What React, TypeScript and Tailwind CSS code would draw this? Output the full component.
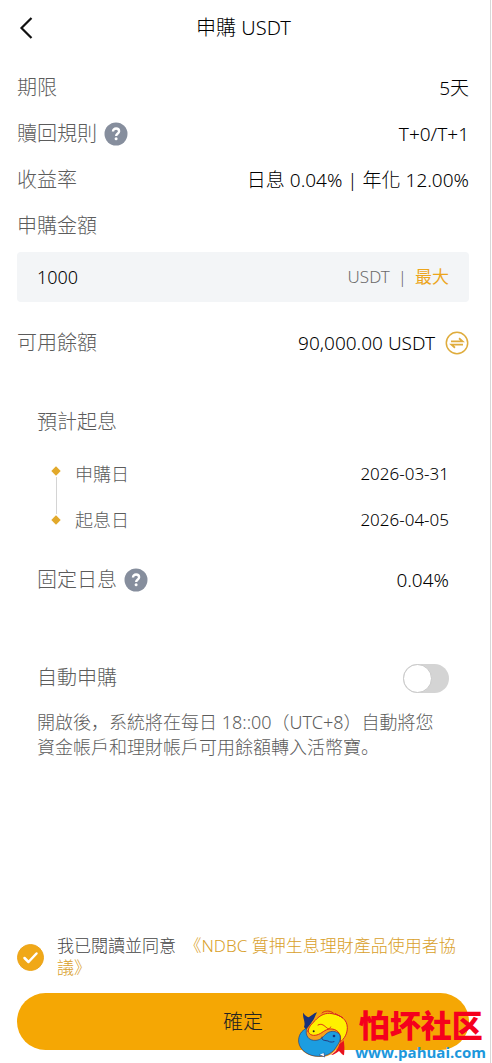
import { useState } from 'react';
import type { ReactNode } from 'react';

interface RowProps {
  label: string;
  help?: boolean;
  children?: ReactNode;
}

function HelpButton({ label }: { label: string }) {
  return (
    <button type="button" aria-label={`${label}說明`} className="ml-[7px] size-6">
      <svg viewBox="0 0 24 24" className="size-6">
        <circle cx="12" cy="12" r="11.5" fill="#868e9d" />
        <path d="M9 9.4c0-1.8 1.3-2.9 3.1-2.9s3 1.1 3 2.7c0 1.3-.8 1.900-1.600 2.500-.8.6-1.300 1-1.300 2.200" fill="none" stroke="#fff" strokeWidth="2.4" />
        <circle cx="12.1" cy="16.8" r="1.5" fill="#fff" />
      </svg>
    </button>
  );
}

function Row({ label, help, children }: RowProps) {
  return (
    <div className="flex min-h-[46px] items-center justify-between">
      <div className="flex items-center text-xl text-[#5c5c5c]">
        <span>{label}</span>
        {help && <HelpButton label={label} />}
      </div>
      <div className="flex items-center text-[19px] text-black">{children}</div>
    </div>
  );
}

function Diamond() {
  return (
    <svg viewBox="0 0 10 10" className="size-[10px] shrink-0">
      <path d="M5 0.3 9.7 5 5 9.7 0.3 5Z" fill="#e2a92b" />
    </svg>
  );
}

function FishLogo() {
  return (
    <svg viewBox="0 0 180 180" className="size-[60px] shrink-0" strokeLinejoin="round" strokeLinecap="round">
      {/* tails */}
      <path d="M30 72C36 56 24 44 28 29c4 8 10 12 16 14 8-4 14-12 25-15-6 10-8 22-20 36L36 80Z" fill="#18307c" />
      <path d="M136 112c2 16-6 32-25 44 8 0 16-6 24-12 4 4 8 10 15 13 2-16 2-32-2-50Z" fill="#e8121c" />
      {/* orange outline of both bodies */}
      <path d="M44 92C42 64 66 34 96 28c28-6 62 12 66 40 4 24-8 44-28 56-4 20-24 38-56 38-34 0-62-18-64-42-2-20 10-36 30-44Z" fill="#f6a11c" />
      <path d="M42 84c2-14 12-22 22-32 14-16 32-24 50-20 26 4 46 18 46 42 0 18-8 32-22 44 6-20-4-38-24-40-18-2-26 10-40 16-14 6-28 4-32-10Z" fill="#fff100" stroke="#d7261c" strokeWidth="3" />
      <path d="M38 76C22 82 12 98 14 118c4 24 30 42 60 42 26 0 44-12 54-30 10-14 14-26 8-36-8-10-24-12-36-4-14 10-16 20-34 22-22 2-34-14-28-36Z" fill="#1c9de0" stroke="#263b7c" strokeWidth="2" />
      {/* fins and gills */}
      <path d="M84 30c8-8 24-8 34 0M124 32l22 12" fill="none" stroke="#d7261c" strokeWidth="3" />
      <path d="M72 66c12-6 18 2 26 8 6 6 10 2 12-2" fill="none" stroke="#d7261c" strokeWidth="3" />
      <path d="M84 102c-4 12 12 10 18 12 6 4 12 4 18 2" fill="none" stroke="#263b7c" strokeWidth="3" />
      <path d="M76 155l16 7-2-12" fill="#fff" stroke="#263b7c" strokeWidth="2" />
      <circle cx="59" cy="85" r="3" fill="#222" />
      <circle cx="120" cy="99" r="4" fill="#18307c" />
    </svg>
  );
}

export default function App() {
  const [amount, setAmount] = useState('1000');
  const [autoBuy, setAutoBuy] = useState(false);
  const [agreed, setAgreed] = useState(true);

  return (
    <div className="mr-px flex min-h-screen flex-col border-r border-[#d8d8d8] bg-white font-['Noto_Sans','Noto_Sans_CJK_TC',sans-serif] font-light">
      <header className="grid h-14 grid-cols-3 items-center pr-5 pl-[17px]">
        <button type="button" aria-label="返回" className="size-6">
          <svg viewBox="0 0 24 24" className="size-6" fill="none" stroke="#111" strokeWidth="2.2">
            <path d="M14.5 2 4.5 12l10 10" />
          </svg>
        </button>
        <h1 className="text-center text-xl whitespace-nowrap text-black">申購 USDT</h1>
      </header>

      <main className="pt-[9px] pr-[21px] pl-[17px]">
        <Row label="期限">5天</Row>
        <Row label="贖回規則" help>T+0/T+1</Row>
        <Row label="收益率">日息 0.04% | 年化 12.00%</Row>
        <label htmlFor="amount" className="flex min-h-[46px] items-center text-xl text-[#5c5c5c]">申購金額</label>

        <div className="mt-[3px] flex h-[50px] items-center rounded bg-[#f3f5f7] px-5 text-[17px]">
          <input
            id="amount"
            value={amount}
            inputMode="decimal"
            onChange={(e) => setAmount(e.target.value)}
            className="min-w-0 flex-1 bg-transparent text-lg text-black outline-none"
          />
          <span className="text-[#6b6b6b]">USDT</span>
          <span className="mx-2 text-[#6b6b6b]">|</span>
          <button type="button" onClick={() => setAmount('90000')} className="font-normal text-[#eca51c]">最大</button>
        </div>

        <div className="mt-[18px]">
          <Row label="可用餘額">
            <span>90,000.00 USDT</span>
            <button type="button" aria-label="劃轉" className="ml-[10px] size-6">
              <svg viewBox="0 0 24 24" className="size-6" fill="none" stroke="#dfac3c" strokeWidth="1.5">
                <circle cx="12" cy="12" r="10.7" />
                <path d="M6 10.3h11.500L14 7.300M18 13.700H6.500L10 16.700" strokeWidth="1.8" />
              </svg>
            </button>
          </Row>
        </div>

        <section className="mt-[33px] px-5">
          <Row label="預計起息" />
          <div className="mt-[6px] flex">
            <div className="mx-[14px] flex flex-col items-center pt-[15px] pb-[18px]">
              <Diamond />
              <div className="my-px w-px flex-1 bg-[#d4d4d4]" />
              <Diamond />
            </div>
            <dl className="flex-1">
              <div className="flex h-[46px] items-center justify-between">
                <dt className="text-lg text-[#5c5c5c]">申購日</dt>
                <dd className="text-[17px] text-black">2026-03-31</dd>
              </div>
              <div className="flex h-[46px] items-center justify-between">
                <dt className="text-lg text-[#5c5c5c]">起息日</dt>
                <dd className="text-[17px] text-black">2026-04-05</dd>
              </div>
            </dl>
          </div>
          <div className="mt-[14px]">
            <Row label="固定日息" help>0.04%</Row>
          </div>
        </section>

        <section className="mt-[52px] px-5">
          <Row label="自動申購">
            <button
              type="button"
              role="switch"
              aria-checked={autoBuy}
              aria-label="自動申購"
              onClick={() => setAutoBuy(!autoBuy)}
              className={`flex h-[29px] w-[46px] items-center rounded-full ${autoBuy ? 'justify-end bg-[#f5a704]' : 'bg-[#d4d4d4]'}`}
            >
              <span className="size-[29px] rounded-full border border-[#c8c8c8] bg-white" />
            </button>
          </Row>
          <p className="mt-[9px] font-['Noto_Sans','Noto_Sans_CJK_SC',sans-serif] text-lg leading-[25px] text-[#5c5c5c]">
            開啟後，系統將在每日 18::00（UTC+8）自動將您資金帳戶和理財帳戶可用餘額轉入活幣寶。
          </p>
        </section>
      </main>

      <footer className="mt-auto pr-[21px] pb-[13px] pl-[17px]">
        <div className="mb-[14px] flex items-center">
          <label className="relative mr-[13px] size-[27px] shrink-0">
            <input
              type="checkbox"
              aria-label="我已閱讀並同意"
              checked={agreed}
              onChange={(e) => setAgreed(e.target.checked)}
              className="block size-[27px] appearance-none rounded-full border border-[#eca51c] checked:bg-[#f0a818]"
            />
            {agreed && (
              <svg viewBox="0 0 27 27" className="pointer-events-none absolute inset-0 size-[27px]" fill="none" stroke="#fff" strokeWidth="2.5" strokeLinecap="round" strokeLinejoin="round">
                <path d="m7.5 14 4 4 8-8.500" />
              </svg>
            )}
          </label>
          <p className="text-[17px] leading-[22px] text-[#444]">
            我已閱讀並同意 <a href="#agreement" className="ml-1 text-[#d9a02a]">《NDBC 質押生息理財產品使用者協議》</a>
          </p>
        </div>
        <button type="button" className="h-[57px] w-full rounded-full bg-[#f5a704] text-xl text-[#222]">確定</button>
      </footer>

      <div className="pointer-events-none absolute right-[6px] bottom-0 flex items-end gap-px">
        <FishLogo />
        <div className="flex flex-col items-center">
          <span className="font-['Noto_Sans_CJK_SC',sans-serif] text-[31px] leading-[34px] font-black text-[#f5001d]">怕坏社区</span>
          <span className="font-['Open_Sans',sans-serif] text-[15px] leading-[22px] font-bold text-[#1c97dc]">www.pahuai.com</span>
        </div>
      </div>
    </div>
  );
}
